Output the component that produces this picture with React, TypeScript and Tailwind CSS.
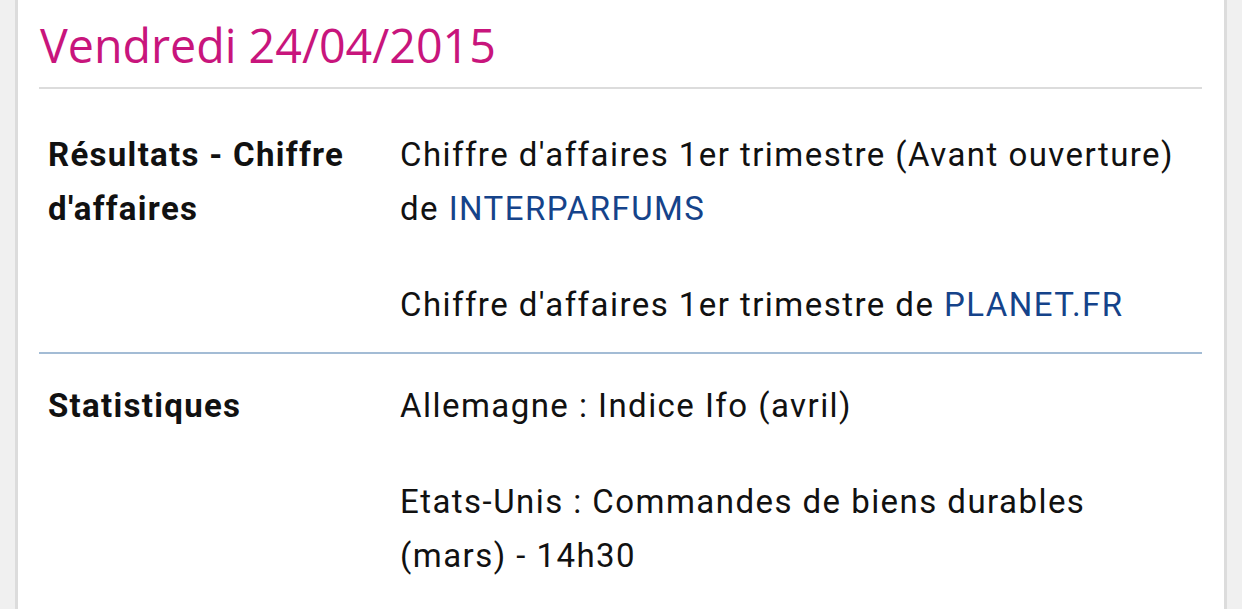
import React from 'react';

type Item = { text: string; link?: string };
type Row = { label: string; items: Item[] };

const rows: Row[] = [
  {
    label: 'Résultats - Chiffre d\'affaires',
    items: [
      { text: 'Chiffre d\'affaires 1er trimestre (Avant ouverture) de ', link: 'INTERPARFUMS' },
      { text: 'Chiffre d\'affaires 1er trimestre de ', link: 'PLANET.FR' },
    ],
  },
  {
    label: 'Statistiques',
    items: [
      { text: 'Allemagne : Indice Ifo (avril)' },
      { text: 'Etats-Unis : Commandes de biens durables (mars) - 14h30' },
    ],
  },
];

export default function App() {
  return (
    <div className="h-[609px] overflow-hidden bg-[#f0f0f0] px-[15px]">
      <div className="min-h-full bg-white border-x-[3px] border-[#dcdcdc] pl-[21px] pr-[22px]">
        {/* Day header */}
        <h1 className="pt-[14px] pb-[11px] pl-px text-[46.6px] leading-[62px] text-[#c8157c] font-['Open_Sans',sans-serif] border-b-2 border-[#dcdcdc]">
          Vendredi 24/04/2015
        </h1>

        <div className="font-['Roboto',sans-serif] text-[33px] leading-[54px] tracking-[1.45px] text-[#111]">
          {rows.map((row, i) => (
            <div
              key={row.label}
              className={
                i === 0
                  ? 'flex pl-[9px] pt-[39px] pb-[20px] border-b-2 border-[#a3bcd5]'
                  : 'flex pl-[9px] pt-[25px] pb-[20px]'
              }
            >
              <div className="w-[352px] shrink-0 pr-[30px] font-bold tracking-[1.3px]">{row.label}</div>
              <div className="flex-1 pr-[10px] space-y-[42px]">
                {row.items.map((item) => (
                  <p key={item.text}>
                    {item.text}
                    {item.link && <span className="text-[#15438a]">{item.link}</span>}
                  </p>
                ))}
              </div>
            </div>
          ))}
        </div>
      </div>
    </div>
  );
}
